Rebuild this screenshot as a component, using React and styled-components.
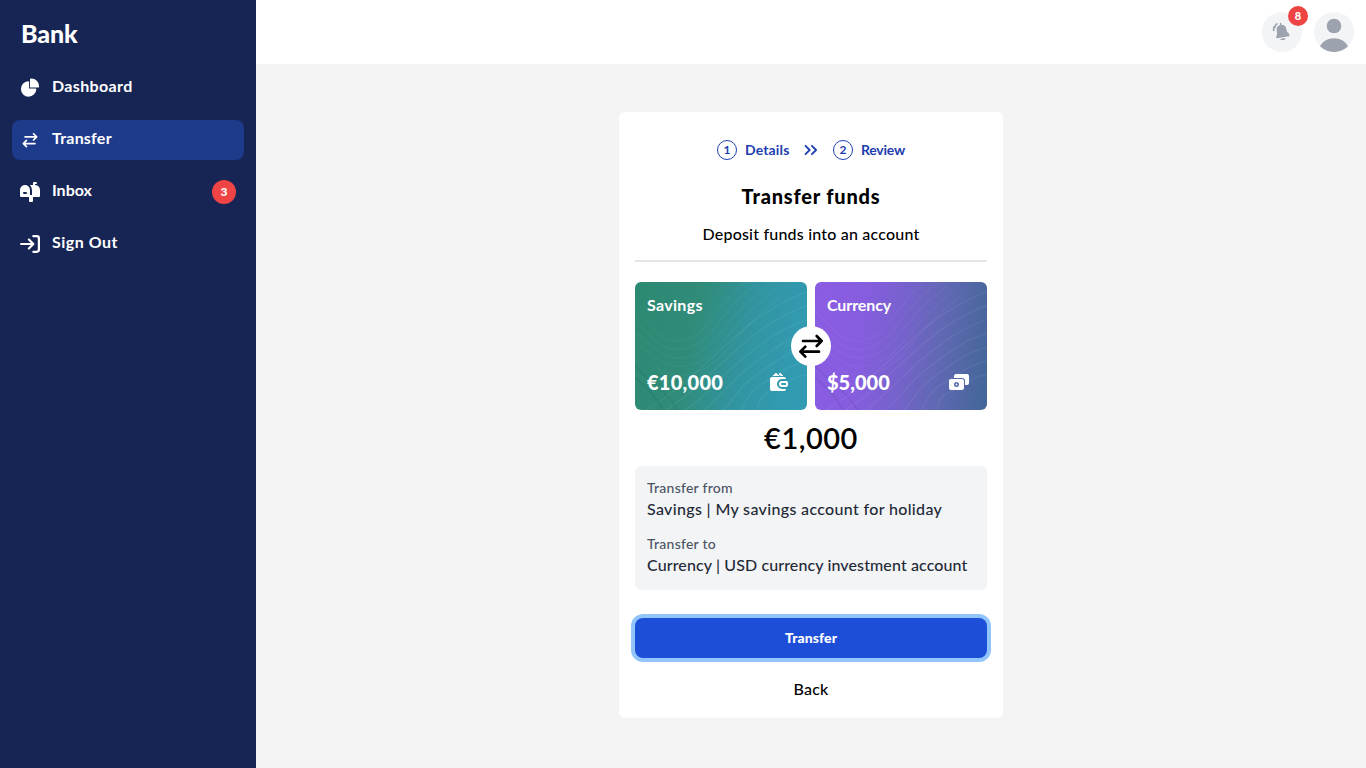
import React from "react";
import styled, { createGlobalStyle } from "styled-components";

const GlobalStyle = createGlobalStyle`
  *, *::before, *::after { box-sizing: border-box; }
  body {
    margin: 0;
    background: #f4f4f4;
    color: #000;
    font-family: Lato, "Open Sans", sans-serif;
    font-size: 16px;
    line-height: 24px;
    overflow: hidden;
  }
  button { font: inherit; letter-spacing: inherit; border: 0; padding: 0; background: none; }
  h1, h2, p { margin: 0; }
  svg { display: block; flex: none; }
`;

const Shell = styled.div`
  display: flex;
  height: 768px;
  width: 1366px;
`;

const Sidebar = styled.aside`
  width: 256px;
  padding: 16px 12px;
  background: #172554;
  color: #fff;
`;

const Brand = styled.h1`
  padding-left: 9px;
  font-size: 25px;
  font-weight: 900;
  line-height: 34px;
  letter-spacing: -0.1px;
`;

const Nav = styled.nav`
  display: flex;
  flex-direction: column;
  gap: 12px;
  margin-top: 18px;
`;

const NavItem = styled.a`
  display: flex;
  align-items: center;
  gap: 12px;
  height: 40px;
  padding: 0 8px;
  border-radius: 8px;
  background: ${(p) => (p.$active ? "#1e3a8a" : "transparent")};
  font-weight: 700;
`;

const NavLabel = styled.span`
  flex: 1;
  line-height: 22px;
  padding-bottom: 4px;
  letter-spacing: ${(p) => p.$tracking}px;
`;

const IconBox = styled.span`
  display: grid;
  place-items: center;
  width: 20px;
  height: 20px;
`;

const Count = styled.span`
  display: grid;
  place-items: center;
  width: ${(p) => p.$size}px;
  height: ${(p) => p.$size}px;
  border-radius: 50%;
  background: #ef4444;
  color: #fff;
  font-size: ${(p) => p.$font}px;
  font-weight: 900;
  line-height: 1;
  padding-bottom: 1px;
`;

const Content = styled.div`
  flex: 1;
  display: flex;
  flex-direction: column;
`;

const TopBar = styled.header`
  display: flex;
  justify-content: flex-end;
  align-items: center;
  gap: 12px;
  height: 64px;
  padding: 0 12px;
  background: #fff;
`;

const RoundButton = styled.button`
  position: relative;
  display: grid;
  place-items: center;
  width: 40px;
  height: 40px;
  border-radius: 50%;
  background: #f3f4f6;
  color: #9ca3af;
`;

const BadgeAnchor = styled.span`
  position: absolute;
  top: -6px;
  right: -6px;
`;

const Main = styled.main`
  display: flex;
  justify-content: center;
  align-items: flex-start;
  padding-top: 48px;
`;

const Panel = styled.section`
  display: flex;
  flex-direction: column;
  width: 384px;
  height: 606px;
  padding: 28px 16px 16px;
  border-radius: 6px;
  background: #fff;
`;

const Steps = styled.div`
  display: flex;
  align-items: center;
  justify-content: center;
  height: 20px;
  color: #1e40af;
  font-size: 14px;
  font-weight: 700;
  line-height: 20px;
`;

const StepNumber = styled.span`
  display: grid;
  place-items: center;
  width: 20px;
  height: 20px;
  margin-right: 8px;
  border: 1px solid #1e40af;
  border-radius: 50%;
  font-size: 12px;
  line-height: 18px;
`;

const StepLabel = styled.span`
  width: ${(p) => p.$width}px;
  white-space: nowrap;
  letter-spacing: ${(p) => p.$tracking}px;
`;

const StepArrow = styled.span`
  padding: 0 15px;
`;

const Title = styled.h2`
  margin-top: 22px;
  text-align: center;
  font-size: 20px;
  font-weight: 900;
  line-height: 28px;
  letter-spacing: 0.8px;
`;

const Subtitle = styled.p`
  margin-top: 12px;
  padding-bottom: 14px;
  border-bottom: 2px solid #e5e5e5;
  text-align: center;
  font-weight: 500;
  letter-spacing: 0.2px;
`;

const Accounts = styled.div`
  position: relative;
  display: grid;
  grid-template-columns: 1fr 1fr;
  gap: 8px;
  margin-top: 20px;
`;

const AccountCard = styled.article`
  position: relative;
  display: flex;
  flex-direction: column;
  justify-content: space-between;
  height: 128px;
  padding: 11px 16px 15px 12px;
  overflow: hidden;
  border-radius: 6px;
  background: ${(p) => p.$fill};
  color: #fff;
`;

const Waves = styled.svg`
  position: absolute;
  inset: 0;
`;

const AccountName = styled.span`
  position: relative;
  font-weight: 700;
  letter-spacing: ${(p) => p.$tracking}px;
`;

const AccountFoot = styled.div`
  position: relative;
  display: flex;
  align-items: center;
  justify-content: space-between;
  height: 26px;
  font-size: 20px;
  font-weight: 900;
  letter-spacing: ${(p) => p.$tracking}px;
`;

const Swap = styled.span`
  position: absolute;
  top: 44px;
  left: 156px;
  display: grid;
  place-items: center;
  width: 40px;
  height: 40px;
  border-radius: 50%;
  background: #fff;
`;

const Amount = styled.p`
  margin-top: 10px;
  text-align: center;
  font-size: 29px;
  font-weight: 600;
  line-height: 36px;
  letter-spacing: 0.5px;
`;

const Summary = styled.div`
  display: flex;
  flex-direction: column;
  gap: 12px;
  height: 124px;
  margin-top: 10px;
  padding: 12px;
  border-radius: 6px;
  background: #f3f4f6;
`;

const Term = styled.p`
  color: #4b5563;
  font-size: 14px;
  font-weight: 500;
  line-height: 20px;
  letter-spacing: 0.25px;
`;

const Value = styled.p`
  padding-bottom: 2px;
  color: #1f2937;
  font-weight: 500;
  line-height: 22px;
  white-space: nowrap;
  letter-spacing: ${(p) => p.$tracking}px;
`;

const PrimaryButton = styled.button`
  height: 40px;
  margin-top: 28px;
  border-radius: 8px;
  background: #1d4ed8;
  box-shadow: 0 0 0 4px #93c5fd;
  color: #fff;
  font-size: 14px;
  font-weight: 900;
  letter-spacing: 0.1px;
`;

const BackButton = styled.button`
  height: 24px;
  margin-top: 19px;
  font-size: 16px;
  font-weight: 500;
  letter-spacing: 0.2px;
`;

const PieIcon = () => (
  <svg width="20" height="20" viewBox="0 0 22 21" fill="currentColor">
    <path d="M16.975 11H10V4.025a1 1 0 0 0-1.066-.998 8.5 8.5 0 1 0 9.039 9.039.999.999 0 0 0-1-1.066h.002Z" />
    <path d="M12.5 0c-.157 0-.311.01-.565.027A1 1 0 0 0 11 1.02V10h8.975a1 1 0 0 0 1-.935c.013-.188.028-.374.028-.565A8.51 8.51 0 0 0 12.5 0Z" />
  </svg>
);

const TransferIcon = ({ size }) => (
  <svg width={size} height={size} viewBox="0 0 24 24" fill="none" stroke="currentColor" strokeWidth="2" strokeLinecap="round" strokeLinejoin="round">
    <path d="M6 8.25h14m0 0L16.25 4.5M20 8.25 16.25 12M18 16.25H4m0 0 3.75-3.75M4 16.25 7.75 20" />
  </svg>
);

const MailboxIcon = () => (
  <svg width="20" height="20" viewBox="0 0 20 20" fill="currentColor">
    <path d="m17.418 3.623-.018-.008a6.713 6.713 0 0 0-2.4-.569V2h1a1 1 0 1 0 0-2h-2a1 1 0 0 0-1 1v2H9.89A6.977 6.977 0 0 1 12 8v5h-2V8A5 5 0 1 0 0 8v6a1 1 0 0 0 1 1h8v4a1 1 0 0 0 1 1h2a1 1 0 0 0 1-1v-4h6a1 1 0 0 0 1-1V8a5 5 0 0 0-2.582-4.377ZM6 12H4a1 1 0 0 1 0-2h2a1 1 0 0 1 0 2Z" />
  </svg>
);

const SignOutIcon = () => (
  <svg width="20" height="20" viewBox="0 0 18 16" fill="none" stroke="currentColor" strokeWidth="2" strokeLinecap="round" strokeLinejoin="round">
    <path d="M1 8h11m0 0L8 4m4 4-4 4m4-11h3a2 2 0 0 1 2 2v10a2 2 0 0 1-2 2h-3" />
  </svg>
);

const BellIcon = () => (
  <svg width="20" height="20" viewBox="0 0 20 20">
    <g fill="currentColor">
      <path d="M7.8 1.7a.75.75 0 0 1 1.5-.25l.2 1.3c2.500 0 4.200 1.300 4.700 3.700l.5 2.400c.4 1.800 2.500 2.300 2.700 3.800.1.800-.1 1.500-.8 1.600L5.300 16.200c-.6.1-1-.1-1.100-.7-.3-1.500 1.200-2.500.9-4.500l-.4-2.600C4.300 5.700 5.600 3.900 8 3.100Z" />
      <path d="m8 16.900 5.700-1c-.3 1.200-1.100 2-2.300 2.200-1.300.3-2.500-.2-3.400-1.200Z" />
    </g>
    <path d="M4.800 1.900C3.400 2.700 2.800 3.900 2.900 5.500M1.900 5.100C1.500 6.300 1.500 7.300 1.800 8.500" fill="none" stroke="currentColor" strokeWidth="1.700" strokeLinecap="round" />
  </svg>
);

const AvatarIcon = () => (
  <svg width="40" height="40" viewBox="0 0 40 40" fill="currentColor">
    <circle cx="20" cy="14" r="7.300" />
    <path d="M6 34.300C8.800 29.200 14 26.300 20 26.300S31.200 29.200 34 34.300A20 20 0 0 1 6 34.300Z" />
  </svg>
);

const DoubleChevron = () => (
  <svg width="14" height="12" viewBox="0 0 14 12" fill="none" stroke="currentColor" strokeWidth="1.800" strokeLinecap="round" strokeLinejoin="round">
    <path d="m1.500 1.800 4.200 4.200-4.200 4.200M7.900 1.800 12.100 6 7.900 10.200" />
  </svg>
);

const WalletIcon = () => (
  <svg width="24" height="24" viewBox="0 0 24 24" fill="currentColor">
    <path fillRule="evenodd" clipRule="evenodd" d="M12 14a3 3 0 0 1 3-3h4a2 2 0 0 1 2 2v2a2 2 0 0 1-2 2h-4a3 3 0 0 1-3-3Zm3-1a1 1 0 1 0 0 2h4v-2h-4Z" />
    <path fillRule="evenodd" clipRule="evenodd" d="M12.293 3.293a1 1 0 0 1 1.414 0L16.414 6h-2.828l-1.293-1.293a1 1 0 0 1 0-1.414ZM12.414 6 9.707 3.293a1 1 0 0 0-1.414 0L5.586 6h6.828ZM4.586 7l-.056.055A2 2 0 0 0 3 9v10a2 2 0 0 0 2 2h12a2 2 0 0 0 2-2h-4a5 5 0 0 1 0-10h4a2 2 0 0 0-1.530-1.945L17.414 7H4.586Z" />
  </svg>
);

const CashIcon = () => (
  <svg width="24" height="24" viewBox="0 0 24 24" fill="currentColor">
    <path fillRule="evenodd" clipRule="evenodd" d="M7 6a2 2 0 0 1 2-2h11a2 2 0 0 1 2 2v7a2 2 0 0 1-2 2h-2v-4a3 3 0 0 0-3-3H7V6Z" />
    <path fillRule="evenodd" clipRule="evenodd" d="M2 11a2 2 0 0 1 2-2h11a2 2 0 0 1 2 2v7a2 2 0 0 1-2 2H4a2 2 0 0 1-2-2v-7Zm7.500 1a2.500 2.500 0 1 0 0 5 2.500 2.500 0 0 0 0-5Z" />
    <path d="M10.500 14.500a1 1 0 1 1-2 0 1 1 0 0 1 2 0Z" />
  </svg>
);

const contourOffsets = [0, 1, 2, 3, 4, 5, 6];

const Contours = () => (
  <Waves width="172" height="128" viewBox="0 0 172 128" fill="none" strokeWidth="1.2">
    {contourOffsets.map((n) => (
      <path
        key={n}
        stroke="#fff"
        strokeOpacity="0.07"
        d={`M${4 + n * 20} 132C${40 + n * 14} ${112 + n * 3} ${64 + n * 9} ${88 + n * 5} ${92 + n * 7} ${62 + n * 8}S${140 + n * 3} ${22 + n * 12} 176 ${8 + n * 14}`}
      />
    ))}
    {contourOffsets.slice(0, 5).map((n) => (
      <path
        key={n}
        stroke="#fff"
        strokeOpacity="0.045"
        d={`M-4 ${26 + n * 11}C${12 + n} ${34 + n * 11} ${22 + n * 2} ${66 + n * 9} ${50 + n * 3} ${58 + n * 8}S${76 + n * 4} ${24 + n * 8} ${116 + n * 8} ${-4 + n * 4}`}
      />
    ))}
    <path d="M-2 82C12 98 28 104 44 130M-2 94C10 104 20 112 29 130" stroke="#16324f" strokeOpacity="0.11" />
  </Waves>
);

const accounts = [
  {
    name: "Savings",
    balance: "€10,000",
    fill: "linear-gradient(103deg, #2c8971 0%, #308c79 34%, #3194a0 62%, #329ab0 86%, #329ab3 100%)",
    icon: <WalletIcon />,
    nameTracking: 0.3,
    tracking: 0.25,
  },
  {
    name: "Currency",
    balance: "$5,000",
    fill: "linear-gradient(97deg, #8b5ce2 0%, #865ddf 28%, #7662cc 50%, #6168b4 70%, #446799 98%)",
    icon: <CashIcon />,
    nameTracking: -0.1,
    tracking: 0,
  },
];

const navItems = [
  { label: "Dashboard", icon: <PieIcon />, tracking: 0.36 },
  { label: "Transfer", icon: <TransferIcon size={20} />, active: true, tracking: 0.22 },
  { label: "Inbox", icon: <MailboxIcon />, count: 3, tracking: 0 },
  { label: "Sign Out", icon: <SignOutIcon />, tracking: 0.5 },
];

export default function App() {
  return (
    <>
      <GlobalStyle />
      <Shell>
        <Sidebar>
          <Brand>Bank</Brand>
          <Nav>
            {navItems.map((item) => (
              <NavItem key={item.label} $active={item.active}>
                <IconBox>{item.icon}</IconBox>
                <NavLabel $tracking={item.tracking}>{item.label}</NavLabel>
                {item.count && <Count $size={24} $font={12}>{item.count}</Count>}
              </NavItem>
            ))}
          </Nav>
        </Sidebar>
        <Content>
          <TopBar>
            <RoundButton aria-label="Notifications">
              <BellIcon />
              <BadgeAnchor>
                <Count $size={20} $font={11}>8</Count>
              </BadgeAnchor>
            </RoundButton>
            <RoundButton aria-label="Profile">
              <AvatarIcon />
            </RoundButton>
          </TopBar>
          <Main>
            <Panel>
              <Steps>
                <StepNumber>1</StepNumber>
                <StepLabel $width={44} $tracking={0.15}>Details</StepLabel>
                <StepArrow><DoubleChevron /></StepArrow>
                <StepNumber>2</StepNumber>
                <StepLabel $width={44} $tracking={-0.25}>Review</StepLabel>
              </Steps>
              <Title>Transfer funds</Title>
              <Subtitle>Deposit funds into an account</Subtitle>
              <Accounts>
                {accounts.map((account) => (
                  <AccountCard key={account.name} $fill={account.fill}>
                    <Contours />
                    <AccountName $tracking={account.nameTracking}>{account.name}</AccountName>
                    <AccountFoot $tracking={account.tracking}>
                      <span>{account.balance}</span>
                      {account.icon}
                    </AccountFoot>
                  </AccountCard>
                ))}
                <Swap><TransferIcon size={32} /></Swap>
              </Accounts>
              <Amount>€1,000</Amount>
              <Summary>
                <div>
                  <Term>Transfer from</Term>
                  <Value $tracking={0.34}>Savings | My savings account for holiday</Value>
                </div>
                <div>
                  <Term>Transfer to</Term>
                  <Value $tracking={0.11}>Currency | USD currency investment account</Value>
                </div>
              </Summary>
              <PrimaryButton>Transfer</PrimaryButton>
              <BackButton>Back</BackButton>
            </Panel>
          </Main>
        </Content>
      </Shell>
    </>
  );
}
